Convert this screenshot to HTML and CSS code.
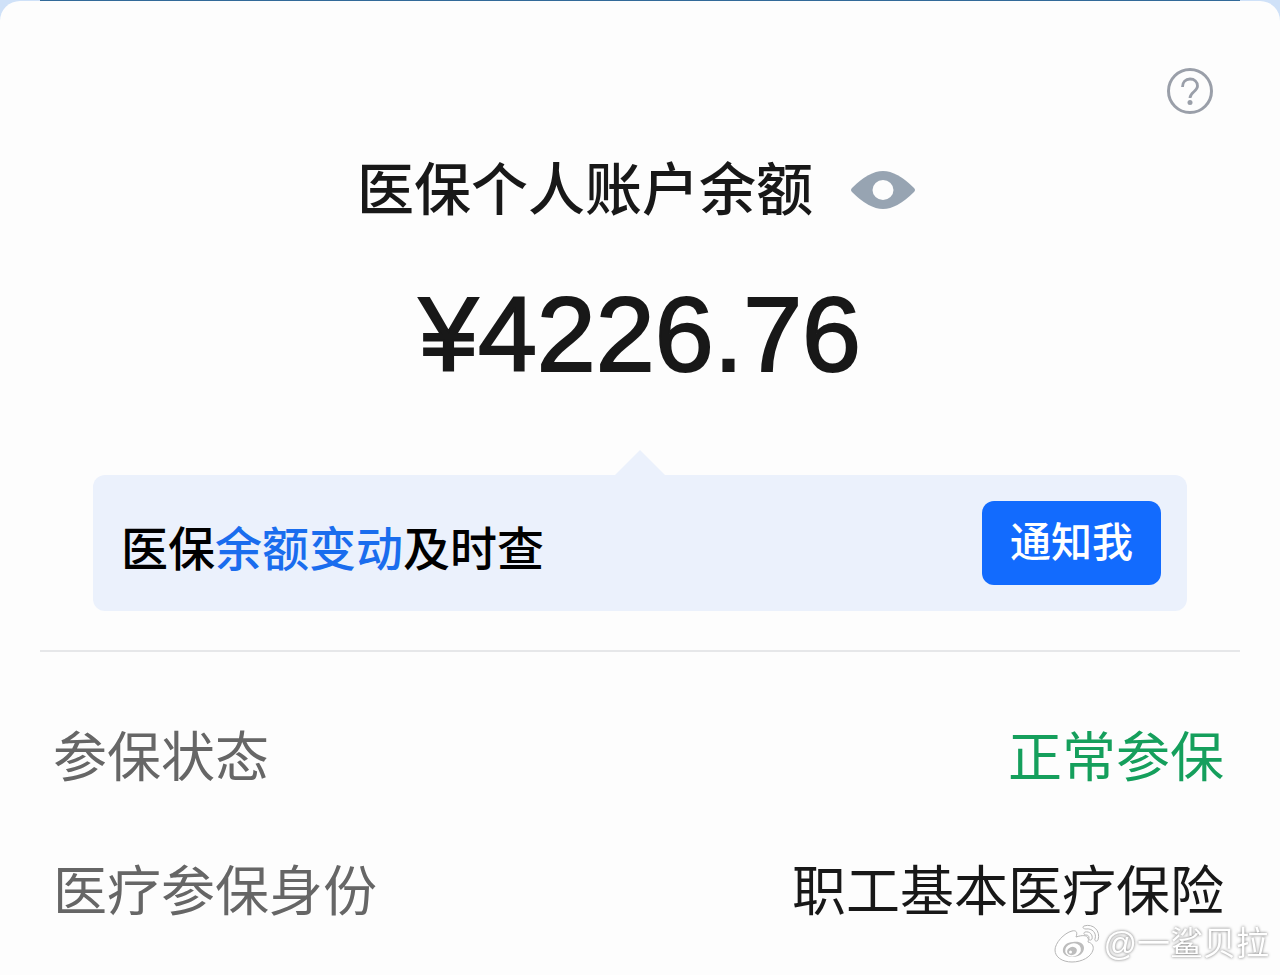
FILE: index.html
```html
<!DOCTYPE html>
<html lang="zh-CN">
<head>
  <meta charset="UTF-8">
  <meta name="viewport" content="width=device-width, initial-scale=1.0">
  <title>医保个人账户</title>
  <link rel="stylesheet" href="styles.css">
</head>
<body>
  <div class="topline"></div>
  <main class="card">
    <div class="card-header">
      <button class="icon-button" type="button" aria-label="帮助">
        <svg class="help-icon" viewBox="0 0 46 46" fill="none" stroke="#9a9fa9">
          <circle cx="23" cy="23" r="21.500" stroke-width="3"/>
          <path d="M15.500 19c0-5 3-8 7.500-8s7.500 2.800 7.500 7c0 5.500-7.500 6-7.500 12" stroke-width="2.800"/>
          <circle cx="23" cy="34.500" r="2.500" fill="#9a9fa9" stroke="none"/>
        </svg>
      </button>
    </div>

    <div class="title-row">
      <h1>医保个人账户余额</h1>
      <button class="icon-button" type="button" aria-label="隐藏余额">
        <svg class="eye-icon" viewBox="0 0 64 38">
          <path d="M1 17Q18 0 32 0t31 17q2 2 0 4Q46 38 32 38T1 21q-2-2 0-4z" fill="#97a4b2"/>
          <ellipse cx="32" cy="19" rx="10.500" ry="10" fill="#fdfdfd"/>
        </svg>
      </button>
    </div>
    <div class="amount">¥4226.76</div>

    <div class="notice">
      <p class="notice-text">医保<span class="highlight">余额变动</span>及时查</p>
      <button class="notify-button" type="button">通知我</button>
    </div>

    <dl class="info-list">
      <div class="info-item">
        <dt>参保状态</dt>
        <dd class="normal">正常参保</dd>
      </div>
      <div class="info-item">
        <dt>医疗参保身份</dt>
        <dd>职工基本医疗保险</dd>
      </div>
    </dl>
  </main>

  <div class="watermark">
    <svg class="weibo-icon" viewBox="0 0 46 40" fill="#fff" stroke="#b5b5b5">
      <path d="M18 7c4-1 6 1 4 6 6-2 11-2 12 1 1 2 0 3 0 4 4 1 6 4 5 8-2 7-11 12-21 12C8 38 1 33 1 26 1 19 10 9 18 7z"/>
      <path d="M9 28c-1-6 4-10 10-10 7-1 11 2 11 6 0 5-5 9-11 9-5 0-9-2-10-5z" fill="#bdbdbd" stroke="none"/>
      <ellipse cx="19" cy="26" rx="8" ry="6.500" transform="rotate(-15 19 26)" stroke="none"/>
      <ellipse cx="18" cy="27" rx="5" ry="4" transform="rotate(-20 18 27)" fill="#bdbdbd" stroke="none"/>
      <circle cx="16.500" cy="28" r="1.500" stroke="none"/>
      <path d="M30 2c9-3 17 5 14 14-1 2-4 1-3-1 2-6-3-11-9-10-3 0-4-2-2-3z"/>
      <path d="M31 8c5-1 8 3 7 7-1 2-4 1-3-1 0-2-1-3-3-3s-3-2-1-3z"/>
    </svg>
    <span>@一鲨贝拉</span>
  </div>
</body>
</html>
```
FILE: styles.css
```css
* {
  box-sizing: border-box;
}
body {
  margin: 0;
  font-family: "Liberation Sans", "Noto Sans CJK SC", sans-serif;
  background-color: #cfe1f8;
  color: #181818;
}
.topline {
  height: 1px;
  margin: 0 40px;
  background-color: #326a99;
}
.card {
  min-height: calc(100vh - 1px);
  padding: 67px 40px 0;
  border-radius: 20px 20px 0 0;
  background-color: #fdfdfd;
}
.icon-button {
  padding: 0;
  border: none;
  background: none;
  cursor: pointer;
}
.icon-button svg {
  display: block;
}
.card-header {
  display: flex;
  justify-content: flex-end;
  padding-right: 27px;
}
.help-icon {
  width: 46px;
  height: 46px;
}
.title-row {
  display: flex;
  justify-content: center;
  align-items: center;
  gap: 38px;
  margin-top: 36px;
  padding-right: 8px;
}
h1 {
  margin: 0;
  font-size: 57px;
  font-weight: 500;
  line-height: 80px;
}
.eye-icon {
  width: 64px;
  height: 38px;
}
.amount {
  margin-top: 44px;
  font-size: 106px;
  line-height: 120px;
  text-align: center;
  -webkit-text-stroke: 2px #181818;
}
.notice {
  position: relative;
  display: flex;
  justify-content: space-between;
  align-items: flex-end;
  margin: 81px 53px 39px;
  padding: 26px 26px 26px 28px;
  border-radius: 12px;
  background-color: #ebf1fc;
}
/* 提示框上方的小三角 */
.notice::before {
  content: "";
  position: absolute;
  bottom: 100%;
  left: 50%;
  margin-left: -25px;
  border: 25px solid transparent;
  border-top: none;
  border-bottom-color: #ebf1fc;
}
.notice-text {
  margin: 0;
  color: #000;
  font-size: 47px;
  font-weight: 500;
  line-height: 70px;
}
.highlight {
  color: #1a6dee;
}
.notify-button {
  padding: 0 28px;
  border: none;
  border-radius: 12px;
  background-color: #126bfe;
  color: #fff;
  font-family: inherit;
  font-size: 41px;
  font-weight: 500;
  line-height: 84px;
  cursor: pointer;
}
.info-list {
  margin: 0;
  padding: 39px 16px 0 13px;
  border-top: 2px solid #e6e7e9;
}
.info-item {
  display: flex;
  justify-content: space-between;
  font-size: 54px;
  line-height: 134px;
}
dt {
  color: #666;
}
dd {
  margin: 0;
}
.normal {
  color: #159f5c;
}
.watermark {
  position: fixed;
  right: 11px;
  bottom: 9px;
  display: flex;
  align-items: center;
  gap: 4px;
  color: #fff;
  font-size: 33px;
  line-height: 44px;
  text-shadow: 0 0 3px #666;
}
.weibo-icon {
  width: 46px;
  height: 40px;
}
```
